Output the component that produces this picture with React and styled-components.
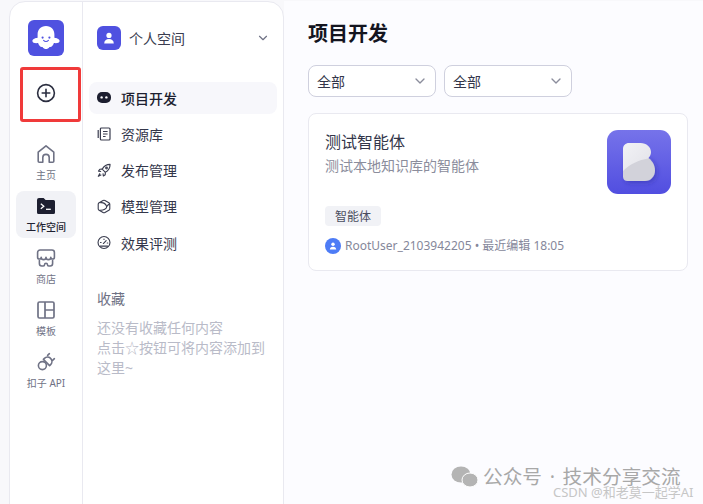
import React from 'react';
import styled, { createGlobalStyle } from 'styled-components';
import { FiChevronDown } from 'react-icons/fi';

const GlobalStyle = createGlobalStyle`
  html, body {
    margin: 0;
    padding: 0;
    background: #f8f8fb;
  }
  body {
    font-family: "Noto Sans", "Noto Sans CJK SC", sans-serif;
    color: #1f2233;
  }
  * { box-sizing: border-box; }
`;

const railItems = [
  { key: 'home', label: '主页', icon: <HomeIcon /> },
  { key: 'work', label: '工作空间', icon: <WorkIcon />, active: true },
  { key: 'store', label: '商店', icon: <StoreIcon /> },
  { key: 'tpl', label: '模板', icon: <TemplateIcon /> },
  { key: 'api', label: '扣子 API', icon: <PlugIcon /> },
];

const navItems = [
  { label: '项目开发', icon: <BotIcon />, active: true },
  { label: '资源库', icon: <BookIcon /> },
  { label: '发布管理', icon: <RocketIcon /> },
  { label: '模型管理', icon: <CubeIcon /> },
  { label: '效果评测', icon: <GaugeIcon /> },
];

function HomeIcon() {
  return (
    <svg width="20" height="20" viewBox="0 0 20 20" fill="none" stroke="#6f7285" strokeWidth="1.6" strokeLinejoin="round">
      <path d="M2.2 8.2 10 1.8l7.8 6.4v9a1 1 0 0 1-1 1h-3.6v-4.6a3.2 3.2 0 0 0-6.4 0v4.6H3.2a1 1 0 0 1-1-1z" />
    </svg>
  );
}

function WorkIcon() {
  return (
    <svg width="18" height="16" viewBox="0 0 18 16">
      <path d="M0 2a2 2 0 0 1 2-2h4.600l2 2H16.500A1.500 1.500 0 0 1 18 3.500V14.500a1.500 1.500 0 0 1-1.500 1.500H1.500A1.500 1.500 0 0 1 0 14.500z" fill="#1d1f30" />
      <path d="m3.800 5.800 3 2.500-3 2.500" fill="none" stroke="#fff" strokeWidth="1.300" />
      <path d="M9 11.300h4.800" stroke="#fff" strokeWidth="1.300" />
    </svg>
  );
}

function StoreIcon() {
  return (
    <svg width="20" height="20" viewBox="0 0 20 20" fill="none" stroke="#6f7285" strokeWidth="1.6" strokeLinejoin="round" strokeLinecap="round">
      <path d="M4 2h12a2.400 2.400 0 0 1 2.400 2.400v4.800a1.800 1.800 0 0 1-3.600 0 2.400 2.400 0 0 1-4.800 0 2.400 2.400 0 0 1-4.800 0 1.800 1.800 0 0 1-3.600 0V4.400A2.400 2.400 0 0 1 4 2z" />
      <path d="M3.400 12.500v3.100a2.400 2.400 0 0 0 2.400 2.400h1.400a1.400 1.400 0 0 0 1.400-1.400 1.400 1.400 0 0 1 2.800 0 1.400 1.400 0 0 0 1.400 1.400h1.400a2.400 2.400 0 0 0 2.400-2.400v-3.100" />
    </svg>
  );
}

function TemplateIcon() {
  return (
    <svg width="18" height="18" viewBox="0 0 18 18" fill="none" stroke="#6f7285" strokeWidth="1.700" strokeLinejoin="round">
      <rect x="1" y="1" width="16" height="16" rx="1.500" />
      <path d="M8 1v16M8 9h9" />
    </svg>
  );
}

function PlugIcon() {
  return (
    <svg width="20" height="20" viewBox="0 0 20 20" fill="none" stroke="#6f7285" strokeWidth="1.600" strokeLinecap="round" strokeLinejoin="round">
      <circle cx="6.400" cy="13.600" r="4" />
      <path d="M8.400 6.400a4.400 4.400 0 0 1 6-.2l.4.400a4.400 4.400 0 0 1-.2 6l-1 1-6.200-6.200z" />
      <path d="m11.600 3.400 1.800-1.700M16.600 8.400l1.800-1.700" />
    </svg>
  );
}

function BotIcon() {
  return (
    <svg width="14" height="11" viewBox="0 0 14 11">
      <rect width="14" height="11" rx="5" fill="#1d1f30" />
      <circle cx="4.600" cy="5.400" r="1.200" fill="#fff" />
      <circle cx="9.400" cy="5.400" r="1.200" fill="#fff" />
    </svg>
  );
}

function BookIcon() {
  return (
    <svg width="14" height="14" viewBox="0 0 14 14" fill="none" stroke="#3a3d4f" strokeWidth="1.200" strokeLinejoin="round">
      <rect x="3.400" y="1" width="9.600" height="12" rx="1" />
      <path d="M1.200 3v8M6 4.500h4.600M6 7h4.600M6 9.500h2.600" />
    </svg>
  );
}

function RocketIcon() {
  return (
    <svg width="15" height="15" viewBox="0 0 15 15" fill="none" stroke="#3a3d4f" strokeWidth="1.200" strokeLinejoin="round">
      <path d="M14 1c-3.800 0-6.400 1.600-8.400 5l3.400 3.400C12.400 7.400 14 4.800 14 1z" />
      <path d="M5.600 6 3 6.200 1.600 8.200 4.400 8.600M9 9.400 8.800 12l-2 1.400-.4-2.800" />
      <circle cx="10.200" cy="4.800" r=".9" />
      <path d="m3.200 10.600-1.800 3.200 3.200-1.800" />
    </svg>
  );
}

function CubeIcon() {
  return (
    <svg width="15" height="15" viewBox="0 0 15 15" fill="none" stroke="#3a3d4f" strokeWidth="1.200" strokeLinejoin="round">
      <path d="M6.500 1.100a2 2 0 0 1 2 0l4.200 2.400a2 2 0 0 1 1 1.700v4.600a2 2 0 0 1-1 1.700l-4.200 2.400a2 2 0 0 1-2 0l-4.200-2.400a2 2 0 0 1-1-1.700V5.200a2 2 0 0 1 1-1.700z" />
      <path d="M3.400 3.400c3-.4 6 1.200 7 4.100.3 2.200-3.400 4.400-7.400 4" />
      <path d="M10.400 7.500c.8-1.200 2-2.300 3.200-3" />
    </svg>
  );
}

function GaugeIcon() {
  return (
    <svg width="15" height="15" viewBox="0 0 15 15" fill="none" stroke="#3a3d4f" strokeWidth="1.200" strokeLinecap="round" strokeLinejoin="round">
      <circle cx="7.500" cy="7.500" r="6.400" />
      <path d="M3.600 11.400h7.800" />
      <path d="m6.800 8.600 3-3.200M3.700 7.500h.7M11 8h.5M7.500 3.700v.6" />
    </svg>
  );
}

function GhostLogo() {
  return (
    <svg width="36" height="36" viewBox="0 0 36 36">
      <rect width="36" height="36" rx="6" fill="#4f51e0" />
      <path d="M18 6c-5.400 0-8.400 3.800-8.400 8.600v3.200c-2.400.3-5.200 1.400-5.200 3.200 0 1.900 2.900 2.400 5.700 2 .7 2.600 2.400 4.400 4.400 3.900 1 1.300 2.200 2.100 3.500 2.100s2.500-.8 3.500-2.100c2 .5 3.700-1.300 4.400-3.900 2.800.4 5.700-.1 5.700-2 0-1.800-2.800-2.900-5.200-3.200v-3.200C26.400 9.800 23.400 6 18 6z" fill="#fff" />
      <circle cx="14.600" cy="17.600" r="1.100" fill="#4f51e0" />
      <circle cx="21.400" cy="17.600" r="1.100" fill="#4f51e0" />
      <path d="M15.600 20.400c1.300 1.400 3.500 1.400 4.800 0" fill="none" stroke="#4f51e0" strokeWidth="1.100" strokeLinecap="round" />
    </svg>
  );
}

function PersonGlyph({ size, color = '#fff' }) {
  return (
    <svg width={size} height={size} viewBox="0 0 12 12" fill={color}>
      <circle cx="6" cy="3.400" r="2.600" />
      <path d="M1.200 11.400c0-2.800 2-4.400 4.800-4.400s4.800 1.600 4.800 4.400z" />
    </svg>
  );
}

function AgentCover() {
  return (
    <svg width="64" height="64" viewBox="0 0 64 64">
      <defs>
        <linearGradient id="coverBg" x1="0" y1="0" x2="0" y2="1">
          <stop offset="0" stopColor="#7673ea" />
          <stop offset="1" stopColor="#514ee0" />
        </linearGradient>
        <linearGradient id="leafTop" x1="0" y1="0" x2="1" y2="1">
          <stop offset="0" stopColor="#f2f2f6" />
          <stop offset="1" stopColor="#e2e2e8" />
        </linearGradient>
        <filter id="coverShadow" x="-30%" y="-30%" width="170%" height="170%">
          <feDropShadow dx="2" dy="2" stdDeviation="2.500" floodColor="#2c2a99" floodOpacity=".4" />
        </filter>
      </defs>
      <rect width="64" height="64" rx="11" fill="url(#coverBg)" />
      <g filter="url(#coverShadow)">
        <path d="M16 26V46.500C16 49.500 18 51 20.500 51H38C44 51 48 46 48 40.500 48 35 45 30 40 27z" fill="#d2d2da" />
      </g>
      <path d="M16 41V19c0-3.500 2.500-6 6-6h11.500C39.500 13 44 17 44 22c0 2.500-1 4.500-3 6.500C32 30 23 34 16 41z" fill="url(#leafTop)" />
    </svg>
  );
}

export default function App() {
  return (
    <>
      <GlobalStyle />
      <Page>
        <SidePanel>
          <Rail>
            <LogoSlot><GhostLogo /></LogoSlot>
            <CreateButton aria-label="创建">
              <svg width="20" height="20" viewBox="0 0 20 20" fill="none" stroke="#2b2e40" strokeWidth="1.600" strokeLinecap="round">
                <circle cx="10" cy="10" r="8.400" />
                <path d="M10 6.200v7.600M6.200 10h7.600" />
              </svg>
            </CreateButton>
            <RailList>
              {railItems.map((item) => (
                <RailItem key={item.key} $active={item.active}>
                  <RailIcon>{item.icon}</RailIcon>
                  <RailLabel $active={item.active}>{item.label}</RailLabel>
                </RailItem>
              ))}
            </RailList>
          </Rail>
          <Nav>
            <SpaceRow>
              <SpaceAvatar><PersonGlyph size={12} /></SpaceAvatar>
              <SpaceName>个人空间</SpaceName>
              <FiChevronDown size={14} color="#6f7285" />
            </SpaceRow>
            <NavList>
              {navItems.map((item) => (
                <NavItem key={item.label} $active={item.active}>
                  <NavIcon>{item.icon}</NavIcon>
                  {item.label}
                </NavItem>
              ))}
            </NavList>
            <FavTitle>收藏</FavTitle>
            <FavHint>还没有收藏任何内容<br />点击☆按钮可将内容添加到这里~</FavHint>
          </Nav>
        </SidePanel>
        <Main>
          <Title>项目开发</Title>
          <Filters>
            <Select>全部<FiChevronDown size={16} color="#8b8d9c" /></Select>
            <Select>全部<FiChevronDown size={16} color="#8b8d9c" /></Select>
          </Filters>
          <Card>
            <CardTop>
              <CardText>
                <CardTitle>测试智能体</CardTitle>
                <CardDesc>测试本地知识库的智能体</CardDesc>
              </CardText>
              <AgentCover />
            </CardTop>
            <Tag>智能体</Tag>
            <MetaRow>
              <MetaAvatar><PersonGlyph size={8} /></MetaAvatar>
              RootUser_2103942205 • 最近编辑 18:05
            </MetaRow>
          </Card>
        </Main>
        <Highlight />
        <Watermark>
          <svg width="27" height="22" viewBox="0 0 27 22" fill="#b4b4b4">
            <ellipse cx="10" cy="8.500" rx="9.500" ry="8" />
            <ellipse cx="19" cy="14" rx="8" ry="7" stroke="#fff" strokeWidth="1" />
          </svg>
          公众号 · 技术分享交流
        </Watermark>
        <Credit>CSDN @和老莫一起学AI</Credit>
      </Page>
    </>
  );
}

const Page = styled.div`
  position: relative;
  width: 703px;
  height: 504px;
  overflow: hidden;
  display: flex;
  padding: 1px 0 0 9px;
`;

const SidePanel = styled.aside`
  width: 275px;
  height: 520px;
  display: flex;
  background: #fff;
  border: 1px solid #e9e9f0;
  border-radius: 16px 16px 0 0;
`;

const Rail = styled.div`
  width: 73px;
  flex: none;
  display: flex;
  flex-direction: column;
  align-items: center;
  padding: 18px 6px 0 6px;
  border-right: 1px solid #e9e9f0;
`;

const LogoSlot = styled.div`
  height: 36px;
  display: flex;
`;

const CreateButton = styled.div`
  height: 52px;
  margin-top: 11px;
  display: flex;
  align-items: center;
  justify-content: center;
`;

const RailList = styled.div`
  display: flex;
  flex-direction: column;
  gap: 5px;
  width: 60px;
  margin-top: 20px;
`;

const RailItem = styled.div`
  height: 47px;
  display: flex;
  flex-direction: column;
  align-items: center;
  justify-content: center;
  gap: 4px;
  border-radius: 8px;
  background: ${(p) => (p.$active ? '#f1f2f6' : 'transparent')};
`;

const RailIcon = styled.div`
  height: 20px;
  display: flex;
  align-items: center;
`;

const RailLabel = styled.span`
  font-size: 10px;
  line-height: 14px;
  font-weight: ${(p) => (p.$active ? 500 : 400)};
  color: ${(p) => (p.$active ? '#1d1f30' : '#6f7285')};
  white-space: nowrap;
`;

const Nav = styled.nav`
  flex: 1;
  min-width: 0;
  padding: 24px 6px 0 6px;
`;

const SpaceRow = styled.div`
  height: 24px;
  display: flex;
  align-items: center;
  padding: 0 7px 0 8px;
  color: #3a3d4f;
`;

const SpaceAvatar = styled.div`
  width: 24px;
  height: 24px;
  flex: none;
  display: flex;
  align-items: center;
  justify-content: center;
  border-radius: 6px;
  background: #4f51e0;
`;

const SpaceName = styled.span`
  flex: 1;
  margin-left: 8px;
  font-size: 14px;
`;

const NavList = styled.div`
  display: flex;
  flex-direction: column;
  gap: 4.25px;
  margin-top: 32px;
`;

const NavItem = styled.div`
  height: 32px;
  display: flex;
  align-items: center;
  gap: 10px;
  padding-left: 8px;
  padding-bottom: 1px;
  border-radius: 8px;
  font-size: 14px;
  font-weight: ${(p) => (p.$active ? 500 : 400)};
  color: ${(p) => (p.$active ? '#1d1f30' : '#33364a')};
  background: ${(p) => (p.$active ? '#f7f7fb' : 'transparent')};
`;

const NavIcon = styled.span`
  width: 14px;
  height: 14px;
  display: flex;
  align-items: center;
  justify-content: center;
`;

const FavTitle = styled.div`
  margin: 31px 0 0 8px;
  font-size: 14px;
  line-height: 18px;
  color: #6f7285;
`;

const FavHint = styled.div`
  margin: 10px 8px 0 8px;
  font-size: 14px;
  line-height: 20px;
  color: #b9bbc8;
`;

const Main = styled.main`
  flex: 1;
  min-width: 0;
  padding: 20px 15px 0 24px;
  background: #fcfcff;
`;

const Title = styled.h1`
  margin: 0;
  font-size: 20px;
  line-height: 26px;
  font-weight: 600;
  color: #14151f;
`;

const Filters = styled.div`
  display: flex;
  gap: 8px;
  margin-top: 18px;
`;

const Select = styled.div`
  width: 128px;
  height: 32px;
  display: flex;
  align-items: center;
  justify-content: space-between;
  padding: 0 7px 0 8px;
  background: #fff;
  border: 1px solid #cfd0de;
  border-radius: 8px;
  font-size: 14px;
  color: #33364a;
`;

const Card = styled.section`
  margin-top: 16px;
  height: 158px;
  padding: 16px 16px 0 16px;
  background: #fff;
  border: 1px solid #e9e9f0;
  border-radius: 8px;
`;

const CardTop = styled.div`
  display: flex;
  justify-content: space-between;
  height: 76px;
`;

const CardText = styled.div`
  display: flex;
  flex-direction: column;
`;

const CardTitle = styled.div`
  font-size: 16px;
  line-height: 24px;
  color: #33364a;
`;

const CardDesc = styled.div`
  font-size: 14px;
  line-height: 24px;
  color: #8b8d9c;
`;

const Tag = styled.div`
  width: max-content;
  height: 20px;
  display: flex;
  align-items: center;
  padding: 0 10px;
  border-radius: 4px;
  background: #f1f2f6;
  font-size: 12px;
  color: #4a4d5e;
`;

const MetaRow = styled.div`
  display: flex;
  align-items: center;
  gap: 4px;
  margin-top: 12px;
  font-size: 12px;
  line-height: 16px;
  color: #85879a;
  white-space: nowrap;
`;

const MetaAvatar = styled.div`
  width: 16px;
  height: 16px;
  display: flex;
  align-items: center;
  justify-content: center;
  border-radius: 50%;
  background: #4d7cf6;
`;

/* annotation from the screenshot, sits over the rail */
const Highlight = styled.div`
  position: absolute;
  left: 20px;
  top: 67px;
  width: 61px;
  height: 55px;
  border: 3px solid #f03a3a;
  border-radius: 3px;
`;

const Watermark = styled.div`
  position: absolute;
  left: 451px;
  top: 466px;
  display: flex;
  align-items: center;
  gap: 5px;
  font-size: 19.7px;
  word-spacing: 2.5px;
  line-height: 18px;
  color: #a8a8a8;
  white-space: nowrap;
`;

const Credit = styled.div`
  position: absolute;
  left: 553px;
  top: 486px;
  font-size: 13px;
  line-height: 13px;
  color: #c6c6c6;
  white-space: nowrap;
`;
